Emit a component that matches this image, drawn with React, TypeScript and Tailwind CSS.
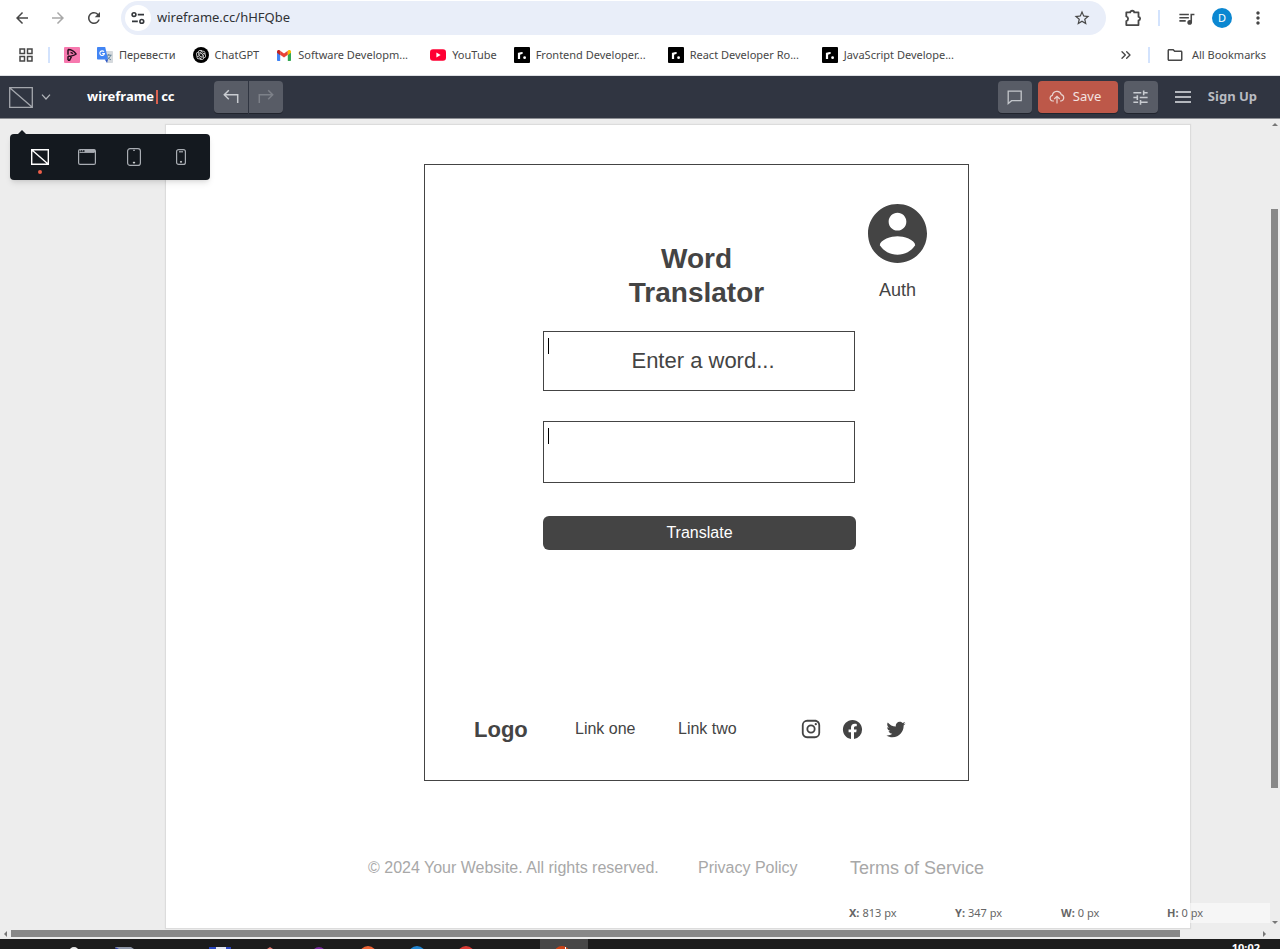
import React from "react";
import {
  MdArrowBack,
  MdArrowForward,
  MdRefresh,
  MdStarBorder,
  MdQueueMusic,
  MdMoreVert,
  MdOutlineFolder,
  MdOutlineGridView,
  MdTune,
} from "react-icons/md";
import { RiOpenaiFill } from "react-icons/ri";
import { ChevronsRight } from "lucide-react";

const SiteSettingsIcon = () => (
  <svg width="14" height="14" viewBox="0 0 14 14" fill="none" stroke="#33363a" strokeWidth="1.6">
    <circle cx="3" cy="3.6" r="1.9" />
    <path d="M6.8 3.6H13M1 10.4h5.8" />
    <circle cx="10.8" cy="10.4" r="1.9" />
  </svg>
);

const PuzzleIcon = () => (
  <svg width="18" height="18" viewBox="0 0 18 18" fill="none" stroke="#474747" strokeWidth="1.8">
    <path d="M2.3 3.4h3.9c0-2.200 4-2.200 4 0h4.300v4.400c2.200.2 2.200 3.400 0 3.600v4.700H2.300v-4c2.400-.6 2.400-4 0-4.600z" strokeLinejoin="round" />
  </svg>
);

const PinkIcon = () => (
  <svg width="16" height="16" viewBox="0 0 16 16">
    <rect width="16" height="16" rx="1" fill="#f778ae" />
    <path d="M4 2.6v5.2M4 2.6c3 0 6 1.4 8 4.4-1.600 1.400-4.800 2.200-8 2.200M6.500 5.400c1 .1 1.800.6 2.400 1.300M4 13.300V9.200M4 13.300h1.600l1.800-3.600" fill="none" stroke="#2a1020" strokeWidth="1.5" />
  </svg>
);

const TranslateIcon = () => (
  <svg width="16" height="16" viewBox="0 0 16 16">
    <path d="M6 4h9.200c.5 0 .8.300.8.800v10.400c0 .5-.3.800-.8.800H10z" fill="#d5d9dd" />
    <path d="M8.800 8.200h5.800M11.700 7v1.200M13.600 8.200c-.4 2-2 3.600-3.600 4.400M10.200 9.200c.6 1.600 2 3 3.800 3.600" stroke="#5f7f94" strokeWidth=".9" fill="none" />
    <path d="M.8 0h7.400L11 12.500H.8c-.5 0-.8-.3-.8-.8V.8C0 .3.300 0 .8 0z" fill="#4285f4" />
    <path d="M7.800 12.500H11L10 16z" fill="#2a56c6" />
    <path d="M7 4.800A2.300 2.300 0 1 0 7.400 6.600H5.200" stroke="#fff" strokeWidth="1.100" fill="none" />
  </svg>
);

const ChatGptIcon = () => (
  <span className="flex size-4 items-center justify-center rounded-full bg-black text-white">
    <RiOpenaiFill size={12} />
  </span>
);

const GmailIcon = () => (
  <svg width="16" height="16" viewBox="0 0 16 16">
    <path d="M1 4v9c0 .6.400 1 1 1h2.200V6.500z" fill="#4285f4" />
    <path d="M15 4v9c0 .6-.4 1-1 1h-2.200V6.500z" fill="#34a853" />
    <path d="M4.200 3.700 8 6.600l3.800-2.900v4L8 10.600 4.200 7.700z" fill="#ea4335" />
    <path d="M11.800 3.700l.6-.5c1.100-.8 2.600 0 2.600 1.300v1.300l-3.200 2.400z" fill="#fbbc04" />
    <path d="M4.200 3.700l-.6-.5C2.500 2.400 1 3.200 1 4.500v1.300l3.200 2.400z" fill="#c5221f" />
  </svg>
);

const YouTubeIcon = () => (
  <svg width="16" height="16" viewBox="0 0 16 16">
    <rect y="2.300" width="16" height="11.400" rx="3" fill="#ff0033" />
    <path d="M6.400 5.600v4.800L10.600 8z" fill="#fff" />
  </svg>
);

const RoadmapIcon = () => (
  <svg width="16" height="16" viewBox="0 0 16 16">
    <rect width="16" height="16" rx="1" fill="#000" />
    <path d="M5 12V5.800M5 8.200c0-1.700 1.200-2.300 3.600-2.200" stroke="#fff" strokeWidth="2.200" fill="none" />
    <circle cx="10.600" cy="10.700" r="1.400" fill="#fff" />
  </svg>
);

const BlankCanvasIcon = ({ size, color }: { size: "lg" | "sm"; color: string }) => (
  <svg width={size === "lg" ? 24 : 18} height={size === "lg" ? 21 : 16} viewBox={size === "lg" ? "0 0 24 21" : "0 0 18 16"} fill="none" stroke={color} strokeWidth={size === "lg" ? 1.3 : 1.4}>
    {size === "lg" ? <path d="M.7.700h22.600v19.600H.7zM.7.700l22.600 19.600" /> : <path d="M.7.700h16.600v14.600H.7zM.7.700l16.600 14.600" />}
  </svg>
);

const BrowserIcon = () => (
  <svg width="18" height="16" viewBox="0 0 18 16" fill="none" stroke="#a9adb3">
    <rect x=".6" y=".6" width="16.800" height="14.800" rx="1.500" strokeWidth="1.200" />
    <path d="M6.500 1.900H17" strokeWidth="2.600" />
    <path d="M1.500 3.400h15" strokeWidth="1" />
    <path d="M2 1.800h1M4 1.800h1" strokeWidth="1" />
  </svg>
);

const TabletIcon = () => (
  <svg width="14" height="18" viewBox="0 0 14 18" fill="none" stroke="#a9adb3" strokeWidth="1.200">
    <rect x=".6" y=".6" width="12.800" height="16.800" rx="2.500" />
    <path d="M6.200 2.300h1.600" />
    <circle cx="7" cy="14.600" r=".7" fill="#fff" stroke="#fff" strokeWidth=".6" />
  </svg>
);

const PhoneIcon = () => (
  <svg width="10" height="16" viewBox="0 0 10 16" fill="none" stroke="#a9adb3" strokeWidth="1.200">
    <rect x=".6" y=".6" width="8.800" height="14.800" rx="2" />
    <path d="M3 2.800h4" />
    <circle cx="5" cy="12.800" r=".6" fill="#fff" stroke="#fff" strokeWidth=".6" />
  </svg>
);

const UndoIcon = ({ flipped = false }: { flipped?: boolean }) => (
  <svg width="16" height="16" viewBox="0 0 16 16" fill="none" stroke="currentColor" strokeWidth="1.500">
    {flipped ? <path d="M1.300 14V5.700h12.900M10.200 1.200l4.500 4.500-4.500 4.500" /> : <path d="M14.700 14V5.700H1.800M5.800 1.200 1.300 5.700l4.500 4.500" />}
  </svg>
);

const CommentIcon = () => (
  <svg width="16" height="15" viewBox="0 0 16 15" fill="none" stroke="#c3c6cb" strokeWidth="1.300">
    <path d="M1.200 1.200h13v9.500H4.600l-3.400 2.900z" />
  </svg>
);

const CloudIcon = () => (
  <svg width="16" height="14" viewBox="0 0 16 14" fill="none" stroke="#e9d3cf" strokeWidth="1.200">
    <path d="M5 11H3.600A2.900 2.900 0 0 1 3.400 5.300 4.600 4.600 0 0 1 12.300 4.600 3.300 3.300 0 0 1 12.200 11H11" />
    <path d="M8 13.500V6.500M5.200 9 8 6.300 10.800 9" />
  </svg>
);

const bookmarks = [
  { label: "Перевести", icon: <TranslateIcon />, wide: false },
  { label: "ChatGPT", icon: <ChatGptIcon />, wide: false },
  { label: "Software Developm...", icon: <GmailIcon />, wide: true },
  { label: "YouTube", icon: <YouTubeIcon />, wide: false },
  { label: "Frontend Developer...", icon: <RoadmapIcon />, wide: true },
  { label: "React Developer Ro...", icon: <RoadmapIcon />, wide: true },
  { label: "JavaScript Develope...", icon: <RoadmapIcon />, wide: true },
];

function BrowserBar() {
  return (
    <header className="shrink-0 border-b border-[#dfe1e5] bg-white text-[#474747]">
      <div className="flex h-9 items-center">
        <nav aria-label="History" className="flex shrink-0 items-center gap-[18px] pr-[18px] pl-[13px]">
          <button type="button" aria-label="Back"><MdArrowBack size={18} /></button>
          <button type="button" aria-label="Forward" className="text-[#a8a8a8]"><MdArrowForward size={18} /></button>
          <button type="button" aria-label="Reload"><MdRefresh size={18} /></button>
        </nav>
        <div className="flex h-[34px] flex-1 items-center rounded-full bg-[#e9eef9] pr-[15px] pl-1">
          <button type="button" aria-label="Site information" className="flex size-[26px] items-center justify-center rounded-full bg-white">
            <SiteSettingsIcon />
          </button>
          <input
            aria-label="Address"
            defaultValue="wireframe.cc/hHFQbe"
            className="ml-1.5 min-w-0 flex-1 bg-transparent text-[13px] text-[#303236] outline-none"
          />
          <button type="button" aria-label="Bookmark this page"><MdStarBorder size={18} /></button>
        </div>
        <div className="flex shrink-0 items-center pr-3 pl-[18px]">
          <button type="button" aria-label="Extensions"><PuzzleIcon /></button>
          <span className="mr-[17px] ml-4 h-4 w-0.5 bg-[#d3e3fd]" />
          <button type="button" aria-label="Media controls"><MdQueueMusic size={19} /></button>
          <button type="button" aria-label="Profile" className="mr-4 ml-4 flex size-5 items-center justify-center rounded-full bg-[#0b87d1] text-[11px] text-white">D</button>
          <button type="button" aria-label="Menu"><MdMoreVert size={20} /></button>
        </div>
      </div>
      <div className="flex h-[39px] items-center pr-3.5 pb-px pl-[17px] text-[11px]">
        <button type="button" aria-label="Apps"><MdOutlineGridView size={18} /></button>
        <span className="mr-3.5 ml-[13px] h-4 w-0.5 bg-[#d3e3fd]" />
        <nav aria-label="Bookmarks" className="flex min-w-0 items-center gap-[17px]">
          <a href="#bookmark" aria-label="Pinned bookmark"><PinkIcon /></a>
          {bookmarks.map((b) => (
            <a key={b.label} href="#bookmark" className="flex shrink-0 items-center gap-1.5">
              {b.icon}
              <span className={b.wide ? "w-[115px] whitespace-nowrap" : "whitespace-nowrap"}>{b.label}</span>
            </a>
          ))}
        </nav>
        <div className="ml-auto flex shrink-0 items-center">
          <button type="button" aria-label="More bookmarks"><ChevronsRight size={16} /></button>
          <span className="mr-4 ml-3.5 h-4 w-0.5 bg-[#d3e3fd]" />
          <button type="button" className="flex items-center gap-2"><MdOutlineFolder size={18} />All Bookmarks</button>
        </div>
      </div>
    </header>
  );
}

const toolButton = "flex h-8 items-center justify-center bg-[#585c66] shadow-[0_1px_0_#20242d]";

function AppBar() {
  return (
    <div className="relative z-10 flex h-[43px] shrink-0 items-center border-b border-[#8b8d92] bg-[#303541] pr-[23px] pl-[9px]">
      <button type="button" aria-label="Choose canvas" className="flex items-center gap-2">
        <BlankCanvasIcon size="lg" color="#a4a7ad" />
        <svg width="10" height="6" viewBox="0 0 10 6" fill="none" stroke="#b3b6bb" strokeWidth="1.200"><path d="m1 .7 4 4.300L9 .7" /></svg>
      </button>
      <a href="#home" className="ml-9 flex w-[127px] items-center text-[13px] font-bold text-white">
        wireframe<span className="mr-[3px] ml-0.5 h-3.5 w-0.5 bg-[#d9604e]" />cc
      </a>
      <div className="flex gap-px">
        <button type="button" aria-label="Undo" className={`${toolButton} w-[34px] rounded-l text-[#c9ccd1]`}><UndoIcon /></button>
        <button type="button" aria-label="Redo" className={`${toolButton} w-[34px] rounded-r text-[#7d8189]`}><UndoIcon flipped /></button>
      </div>
      <div className="ml-auto flex items-center gap-1.5">
        <button type="button" aria-label="Comments" className={`${toolButton} w-[34px] rounded`}><CommentIcon /></button>
        <button type="button" className="flex h-8 w-20 items-center gap-2 rounded bg-[#bd5849] pl-[11px] text-[13px] text-[#f4e4e1] shadow-[0_1px_0_#20242d]"><CloudIcon />Save</button>
        <button type="button" aria-label="Settings" className={`${toolButton} w-[34px] rounded text-[#c9ccd1]`}><MdTune size={19} /></button>
        <button type="button" aria-label="Menu" className="ml-[11px] flex w-4 flex-col gap-[3px]">
          <span className="h-0.5 w-full bg-[#b4b7bd]" />
          <span className="h-0.5 w-full bg-[#b4b7bd]" />
          <span className="h-0.5 w-full bg-[#b4b7bd]" />
        </button>
        <a href="#signup" className="ml-[11px] text-[13px] font-bold text-[#b9bcc1]">Sign Up</a>
      </div>
    </div>
  );
}

function CanvasPicker() {
  return (
    <div role="menu" className="absolute top-[15px] left-2.5 z-20 flex h-[46px] w-[200px] items-center rounded bg-[#14191f] pr-1.5 pl-1.5 shadow-md">
      <span className="absolute -top-1 left-2 border-x-4 border-b-4 border-x-transparent border-b-[#14191f]" />
      <button type="button" aria-label="Blank canvas" className="relative flex flex-1 justify-center">
        <BlankCanvasIcon size="sm" color="#ffffff" />
        <span className="absolute -bottom-[9px] size-1 rounded-full bg-[#ee5f4a]" />
      </button>
      <button type="button" aria-label="Browser" className="flex flex-1 justify-center"><BrowserIcon /></button>
      <button type="button" aria-label="Tablet" className="flex flex-1 justify-center"><TabletIcon /></button>
      <button type="button" aria-label="Phone" className="flex flex-1 justify-center"><PhoneIcon /></button>
    </div>
  );
}

const Caret = () => <span className="absolute top-1.5 left-1 h-4 w-px bg-black" />;

function Wireframe() {
  return (
    <section className="ml-[258px] h-[617px] w-[545px] border border-[#444]">
      <div className="relative pt-[77px] pl-[118px]">
        <h1 className="w-[307px] text-center text-[28px] leading-[34px] font-bold">Word<br />Translator</h1>
        <a href="#auth" className="absolute top-[39px] right-[41px] flex w-[59px] flex-col items-center gap-[15px] text-lg">
          <svg width="59" height="59" viewBox="2 2 20 20" fill="#444">
            <path d="M12 2C6.480 2 2 6.480 2 12s4.480 10 10 10 10-4.480 10-10S17.520 2 12 2zm0 3c1.660 0 3 1.340 3 3s-1.340 3-3 3-3-1.340-3-3 1.340-3 3-3zm0 14.200c-2.500 0-4.710-1.280-6-3.220.03-1.990 4-3.080 6-3.080 1.990 0 5.970 1.090 6 3.080-1.290 1.940-3.500 3.220-6 3.220z" />
          </svg>
          <span className="leading-6">Auth</span>
        </a>
      </div>
      <form className="ml-[118px] w-[313px] pt-[21px]" onSubmit={(e) => e.preventDefault()}>
        <div className="relative h-[60px] w-[312px] border border-[#444]">
          <Caret />
          <input aria-label="Word" placeholder="Enter a word..." className="h-full w-full bg-transparent pl-2 text-center text-[22px] outline-none placeholder:text-[#444] placeholder:opacity-100" />
        </div>
        <div className="relative mt-[30px] h-[62px] w-[312px] border border-[#444]">
          <Caret />
          <textarea aria-label="Translation" className="block h-full w-full resize-none bg-transparent p-1 outline-none" />
        </div>
        <button type="submit" className="mt-[33px] h-[34px] w-full rounded-md bg-[#444] text-base text-white">Translate</button>
      </form>
      <div className="mt-[163px] flex h-8 items-center pl-[49px] text-base">
        <strong className="w-[101px] text-[22px] font-bold">Logo</strong>
        <a href="#one" className="w-[103px]">Link one</a>
        <a href="#two" className="w-[122px]">Link two</a>
        <a href="#instagram" aria-label="Instagram" className="w-[41px]">
          <svg width="22" height="22" viewBox="0 0 24 24" fill="#444">
            <path d="M7.800,2H16.200C19.400,2 22,4.600 22,7.800V16.200A5.800,5.800 0 0,1 16.200,22H7.800C4.600,22 2,19.400 2,16.200V7.800A5.800,5.800 0 0,1 7.800,2M7.600,4A3.600,3.600 0 0,0 4,7.600V16.400C4,18.390 5.610,20 7.600,20H16.400A3.600,3.600 0 0,0 20,16.400V7.600C20,5.610 18.390,4 16.400,4H7.600M17.250,5.500A1.250,1.250 0 0,1 18.500,6.750A1.250,1.250 0 0,1 17.250,8A1.250,1.250 0 0,1 16,6.750A1.250,1.250 0 0,1 17.250,5.500M12,7A5,5 0 0,1 17,12A5,5 0 0,1 12,17A5,5 0 0,1 7,12A5,5 0 0,1 12,7M12,9A3,3 0 0,0 9,12A3,3 0 0,0 12,15A3,3 0 0,0 15,12A3,3 0 0,0 12,9Z" />
          </svg>
        </a>
        <a href="#facebook" aria-label="Facebook" className="w-[44px]">
          <svg width="23" height="23" viewBox="0 0 24 24" fill="#444">
            <path d="M12 2.040C6.500 2.040 2 6.530 2 12.060C2 17.060 5.660 21.210 10.440 21.960V14.960H7.900V12.060H10.440V9.850C10.440 7.340 11.930 5.960 14.220 5.960C15.310 5.960 16.450 6.150 16.450 6.150V8.620H15.190C13.950 8.620 13.560 9.390 13.560 10.180V12.060H16.340L15.890 14.960H13.560V21.960A10 10 0 0 0 22 12.060C22 6.530 17.500 2.040 12 2.040Z" />
          </svg>
        </a>
        <a href="#twitter" aria-label="Twitter">
          <svg width="22" height="22" viewBox="0 0 24 24" fill="#444">
            <path d="M22.460,6C21.690,6.350 20.860,6.580 20,6.690C20.880,6.160 21.560,5.320 21.880,4.310C21.050,4.810 20.130,5.160 19.160,5.360C18.370,4.500 17.260,4 16,4C13.650,4 11.730,5.920 11.730,8.290C11.730,8.630 11.770,8.960 11.840,9.270C8.280,9.090 5.110,7.380 3,4.790C2.630,5.420 2.420,6.160 2.420,6.940C2.420,8.430 3.170,9.750 4.330,10.500C3.620,10.500 2.960,10.300 2.380,10C2.380,10 2.380,10 2.380,10.030C2.380,12.110 3.860,13.850 5.820,14.240C5.460,14.340 5.080,14.390 4.690,14.390C4.420,14.390 4.150,14.360 3.890,14.310C4.430,16 6,17.260 7.890,17.290C6.430,18.450 4.580,19.130 2.560,19.130C2.220,19.130 1.880,19.110 1.540,19.070C3.440,20.290 5.700,21 8.120,21C16,21 20.330,14.460 20.330,8.790C20.330,8.600 20.330,8.420 20.320,8.230C21.160,7.630 21.880,6.870 22.460,6Z" />
          </svg>
        </a>
      </div>
    </section>
  );
}

const readings = [
  ["X:", "813 px"],
  ["Y:", "347 px"],
  ["W:", "0 px"],
  ["H:", "0 px"],
];

function Workspace() {
  return (
    <div className="relative flex min-h-0 flex-1 bg-[#ededed]">
      <CanvasPicker />
      <main className="mt-1.5 mr-20 ml-[166px] flex-1 overflow-hidden bg-white pt-[39px] font-['Liberation_Sans',Arial,sans-serif] text-[#444] shadow-[0_0_1px_1px_#dcdcdc]">
        <Wireframe />
        <footer className="mt-[73px] flex h-7 items-center pl-[202px] text-base text-[#a8a8a8]">
          <span className="w-[330px] whitespace-nowrap">© 2024 Your Website. All rights reserved.</span>
          <a href="#privacy" className="w-[152px]">Privacy Policy</a>
          <a href="#terms" className="text-lg">Terms of Service</a>
        </footer>
      </main>
      <div className="flex w-2.5 shrink-0 flex-col items-center pt-1 pb-1">
        <span className="border-x-[3px] border-b-[3px] border-x-transparent border-b-[#777]" />
        <div className="flex w-full flex-1 flex-col pt-[83px] pb-[133px]">
          <span className="ml-px w-[7px] flex-1 bg-[#888]" />
        </div>
        <span className="border-x-[3px] border-t-[3px] border-x-transparent border-t-[#777]" />
      </div>
      <dl className="absolute right-2.5 bottom-[5px] flex h-5 items-center bg-white/50 pl-3 text-[11px] text-[#666]">
        {readings.map(([name, value]) => (
          <div key={name} className="flex w-[106px] gap-[3px] whitespace-nowrap last:w-[103px]">
            <dt className="font-bold">{name}</dt>
            <dd>{value}</dd>
          </div>
        ))}
      </dl>
    </div>
  );
}

function HorizontalScrollbar() {
  return (
    <div className="flex h-[11px] shrink-0 items-center bg-[#ededed] px-1">
      <span className="border-y-[3px] border-r-[3px] border-y-transparent border-r-[#777]" />
      <div className="flex flex-1 pr-[83px] pl-1">
        <span className="h-[7px] flex-1 bg-[#888]" />
      </div>
      <span className="mr-2.5 border-y-[3px] border-l-[3px] border-y-transparent border-l-[#777]" />
    </div>
  );
}

function Taskbar() {
  return (
    <div className="relative flex h-2.5 shrink-0 justify-end overflow-hidden bg-[#1c1c1c] pr-5">
      <svg className="absolute top-0 left-0" width="600" height="10" viewBox="0 0 600 10" aria-hidden="true">
        <rect x="540" width="48" height="10" fill="#474747" />
        <circle cx="74" cy="13" r="5" fill="#e8e8e8" />
        <path d="M115 8h16l3 2h-18z" fill="#8f97a8" />
        <path d="M115 8l4 2h-3z" fill="#2438a8" />
        <path d="M209 8h22v2h-22z" fill="#2b47c0" />
        <path d="M216 8h10v2h-10z" fill="#e3e6f0" />
        <path d="M270 8l3 2h-6z" fill="#e07a70" />
        <circle cx="319" cy="15" r="7" fill="#7b2ca0" />
        <circle cx="368" cy="16" r="9" fill="#ec6436" />
        <circle cx="417" cy="16" r="9" fill="#2285d0" />
        <circle cx="466" cy="16" r="9" fill="#d83a34" />
        <circle cx="562" cy="15" r="8" fill="#cc4215" />
        <path d="M565 8h1v2h-1z" fill="#fff" />
      </svg>
      <time className="text-[11px] leading-[18px] font-bold text-white">10:02</time>
    </div>
  );
}

export default function App() {
  return (
    <div className="flex h-screen flex-col overflow-hidden bg-white font-['Noto_Sans',sans-serif]">
      <BrowserBar />
      <AppBar />
      <Workspace />
      <HorizontalScrollbar />
      <Taskbar />
    </div>
  );
}
